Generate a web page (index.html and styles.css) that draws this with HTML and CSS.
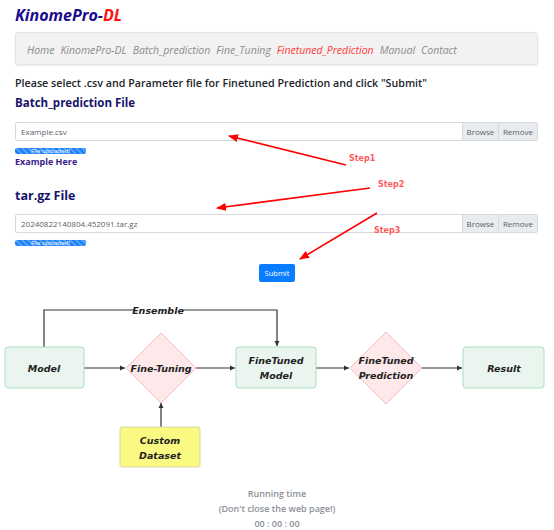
FILE: index.html
```html
<!DOCTYPE html>
<html>
<head>
<meta charset="utf-8">
<link rel="stylesheet" href="styles.css">
</head>
<body>
<div class="page">
  <h1 class="brand">KinomePro-<span class="dl">DL</span></h1>
  <nav class="navbar">
    <a>Home</a><a>KinomePro-DL</a><a>Batch_prediction</a><a>Fine_Tuning</a><a class="active">Finetuned_Prediction</a><a>Manual</a><a>Contact</a>
  </nav>
  <p class="lead">Please select .csv and Parameter file for Finetuned Prediction and click "Submit"</p>
  <h2 class="sec">Batch_prediction File</h2>
  <div class="file-input">
    <div class="fname">Example.csv</div>
    <div class="btn">Browse</div>
    <div class="btn">Remove</div>
  </div>
  <div class="progress">File uploaded!</div>
  <a class="example">Example Here</a>
  <h2 class="sec sec2">tar.gz File</h2>
  <div class="file-input">
    <div class="fname">20240822140804.452091.tar.gz</div>
    <div class="btn">Browse</div>
    <div class="btn">Remove</div>
  </div>
  <div class="progress">File uploaded!</div>
  <div class="submit-row"><button class="submit">Submit</button></div>

  <svg class="diagram" width="554" height="186" viewBox="0 290 554 186">
    <defs>
      <marker id="ah" markerWidth="6" markerHeight="6" refX="5" refY="3" orient="auto" markerUnits="userSpaceOnUse">
        <path d="M0,0.5 L5,3 L0,5.5 Z" fill="#333"/>
      </marker>
    </defs>
    <g fill="none" stroke="#333" stroke-width="1.2">
      <path d="M44,346 V309 H277 V345" marker-end="url(#ah)"/>
      <path d="M84,367 H125" marker-end="url(#ah)"/>
      <path d="M196,367 H235" marker-end="url(#ah)"/>
      <path d="M316,367 H349" marker-end="url(#ah)"/>
      <path d="M422,367 H462" marker-end="url(#ah)"/>
      <path d="M161,426 V402" marker-end="url(#ah)"/>
    </g>
    <rect x="135" y="303" width="47" height="12" fill="#fff"/>
    <rect x="5" y="346" width="79" height="41" rx="3" fill="#e9f5ee" stroke="#a9e0c2"/>
    <rect x="236" y="346" width="80" height="41" rx="3" fill="#e9f5ee" stroke="#a9e0c2"/>
    <rect x="463" y="346" width="81" height="41" rx="3" fill="#e9f5ee" stroke="#a9e0c2"/>
    <rect x="120" y="426" width="80" height="40" rx="2" fill="#fafa82" stroke="#d9d9a6"/>
    <path d="M161,332 L196,367 L161,402 L126,367 Z" fill="#fde9e9" stroke="#f6b8b8"/>
    <path d="M386,331 L422,367 L386,403 L350,367 Z" fill="#fde9e9" stroke="#f6b8b8"/>
    <g class="dtext" text-anchor="middle">
      <text x="158" y="313">Ensemble</text>
      <text x="44" y="371">Model</text>
      <text x="161" y="371">Fine-Tuning</text>
      <text x="276" y="363">FineTuned</text>
      <text x="276" y="378">Model</text>
      <text x="386" y="363">FineTuned</text>
      <text x="386" y="378">Prediction</text>
      <text x="504" y="371">Result</text>
      <text x="160" y="443">Custom</text>
      <text x="160" y="458">Dataset</text>
    </g>
  </svg>

  <div class="timer">
    <div>Running time</div>
    <div>(Don't close the web page!)</div>
    <div>00 : 00 : 00</div>
  </div>

  <svg class="annot" width="554" height="290">
    <defs>
      <marker id="rh" markerWidth="10" markerHeight="8" refX="9" refY="4" orient="auto" markerUnits="userSpaceOnUse">
        <path d="M0,0 L10,4 L0,8 Z" fill="#f00"/>
      </marker>
    </defs>
    <g stroke="#f00" stroke-width="1.6" fill="none">
      <line x1="346" y1="165" x2="229" y2="136" marker-end="url(#rh)"/>
      <line x1="370" y1="188" x2="217" y2="208" marker-end="url(#rh)"/>
      <line x1="377" y1="213" x2="300" y2="259" marker-end="url(#rh)"/>
    </g>
    <g class="step">
      <text x="349" y="161">Step1</text>
      <text x="378" y="187">Step2</text>
      <text x="374" y="233">Step3</text>
    </g>
  </svg>
</div>
</body>
</html>
```
FILE: styles.css
```css
* { box-sizing: border-box; }
html, body { margin: 0; padding: 0; background: #fff; }
body { font-family: "Open Sans", "Noto Sans", sans-serif; color: #212529; }
.page { position: relative; width: 554px; height: 530px; padding: 0 16px 0 15px; }
.brand {
  margin: 0; padding-top: 5px; height: 27px;
  font-size: 16px; line-height: 20px; font-style: italic; font-weight: 700;
  color: #1b0c8c; letter-spacing: 0;
}
.brand .dl { color: #f11; }
.navbar {
  margin-top: 5px; height: 33px; display: flex; align-items: center; gap: 6px;
  padding: 0 11px; background: #f2f2f2; border: 1px solid #e4e4e4; border-radius: 3px;
  box-shadow: 0 1px 2px rgba(0,0,0,0.08);
}
.navbar a { font-style: italic; font-size: 10.5px; color: #8c8c8c; padding-top: 2px; }
.navbar a.active { color: #ff3b3b; }
.lead { margin: 10px 0 0; font-size: 10.7px; line-height: 16px; font-weight: 600; color: #212529; }
.sec { margin: 4px 0 0; font-size: 11.5px; line-height: 16px; font-weight: 700; color: #16146b; }
.sec2 { font-size: 12.5px; margin-top: 20px; }
.file-input {
  margin-top: 11px; height: 19px; display: flex; border: 1px solid #d6dae0; border-radius: 2px;
  font-size: 8px; color: #5a6168;
}
.sec2 + .file-input { margin-top: 10px; }
.fname { flex: 1; padding-left: 5px; line-height: 17px; }
.btn { background: #e9ecef; border-left: 1px solid #d6dae0; width: 36px; text-align: center; line-height: 17px; }
.btn:last-child { width: 39px; }
.progress {
  margin-top: 7px; width: 71px; height: 6px; border-radius: 2px;
  background-color: #1a7ffb;
  background-image: linear-gradient(45deg, rgba(255,255,255,.25) 25%, transparent 25%, transparent 50%, rgba(255,255,255,.25) 50%, rgba(255,255,255,.25) 75%, transparent 75%, transparent);
  background-size: 6px 6px;
  color: #fff; font-size: 6px; line-height: 6px; text-align: center; white-space: nowrap; overflow: hidden;
}
.example { display: block; margin-top: 2px; font-size: 9px; line-height: 12px; font-weight: 700; color: #3c1b8e; }
.submit-row { display: flex; justify-content: center; margin-top: 18px; padding-left: 1px; }
.submit {
  width: 36px; height: 18px; padding: 0; border: none; border-radius: 2px;
  background: #0a7cff; color: #fff; font-family: "Open Sans", sans-serif; font-size: 7.5px;
}
.diagram { display: block; margin-left: -15px; margin-top: 9px; }
.dtext { font-family: "DejaVu Sans", sans-serif; font-style: italic; font-weight: 700; font-size: 9.5px; fill: #222; }
.timer { margin-top: 9px; text-align: center; font-size: 9px; line-height: 15px; font-weight: 600; color: #8b9097; padding-left: 1px; }
.annot { position: absolute; left: 0; top: 0; pointer-events: none; }
.step { font-family: "DejaVu Sans", sans-serif; font-size: 8px; font-weight: 700; fill: #ff5b5b; }
```
